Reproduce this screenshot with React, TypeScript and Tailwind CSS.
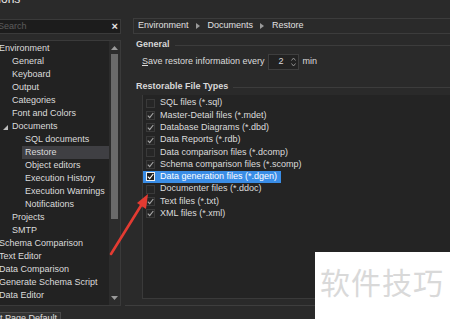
import React from "react";

type Node = { label: string; level: number; expanded?: boolean; selected?: boolean };

const tree: Node[] = [
  { label: "Environment", level: 0 },
  { label: "General", level: 1 },
  { label: "Keyboard", level: 1 },
  { label: "Output", level: 1 },
  { label: "Categories", level: 1 },
  { label: "Font and Colors", level: 1 },
  { label: "Documents", level: 1, expanded: true },
  { label: "SQL documents", level: 2 },
  { label: "Restore", level: 2, selected: true },
  { label: "Object editors", level: 2 },
  { label: "Execution History", level: 2 },
  { label: "Execution Warnings", level: 2 },
  { label: "Notifications", level: 2 },
  { label: "Projects", level: 1 },
  { label: "SMTP", level: 1 },
  { label: "Schema Comparison", level: 0 },
  { label: "Text Editor", level: 0 },
  { label: "Data Comparison", level: 0 },
  { label: "Generate Schema Script", level: 0 },
  { label: "Data Editor", level: 0 },
];

const fileTypes = [
  { label: "SQL files (*.sql)", checked: false },
  { label: "Master-Detail files (*.mdet)", checked: true },
  { label: "Database Diagrams (*.dbd)", checked: true },
  { label: "Data Reports (*.rdb)", checked: true },
  { label: "Data comparison files (*.dcomp)", checked: false },
  { label: "Schema comparison files (*.scomp)", checked: true },
  { label: "Data generation files (*.dgen)", checked: true, selected: true },
  { label: "Documenter files (*.ddoc)", checked: false },
  { label: "Text files (*.txt)", checked: true },
  { label: "XML files (*.xml)", checked: true },
];

const indent = ["pl-0", "pl-[12px]", "pl-[25px]"];

const Check = ({ checked, selected }: { checked: boolean; selected?: boolean }) => (
  <div
    className={
      "w-[9px] h-[9px] flex items-center justify-center border " +
      (selected ? "border-[#f0f0f0] bg-[#1e1e1e]" : "border-[#3a3a3a] bg-[#262626]")
    }
  >
    {checked && (
      <svg width="7" height="7" viewBox="0 0 7 7">
        <path d="M0.8 3.6 L2.7 5.6 L6.3 1" stroke={selected ? "#ffffff" : "#a8a8a8"} strokeWidth="1.1" fill="none" />
      </svg>
    )}
  </div>
);

const Sep = () => (
  <svg width="4" height="6" viewBox="0 0 4 6" className="ml-[7px] mr-[8px]">
    <path d="M0 0 L4 3 L0 6 Z" fill="#9a9a9a" />
  </svg>
);

const App = () => {
  return (
    <div className="relative w-[450px] h-[319px] overflow-hidden bg-[#2a2a2a] text-[9px] text-[#dcdcdc] font-['Liberation_Sans','Noto_Sans_CJK_SC',sans-serif]">
      <div className="h-[17px] flex">
        <div className="-mt-[7px] -ml-[21px] h-[12px] text-[12px] leading-[12px] text-[#e6e6e6]">Options</div>
      </div>

      <div className="flex">
        {/* left navigation */}
        <div className="w-[121px] flex flex-col">
          <div className="mt-[2px] h-[15px] flex items-center justify-between border border-[#3a3a3a] border-l-0 bg-[#1c1c1c]">
            <span className="-ml-[2px] text-[#5c5c5c]">Search</span>
            <span className="mr-[2px] text-[11px] font-bold text-[#e6e6e6] leading-none">×</span>
          </div>
          <div className="mt-[6px] h-[266px] flex border border-[#3a3a3a] border-l-0 bg-[#222222]">
            <div className="flex-1 pt-[1px] overflow-hidden">
              {tree.map((n) => (
                <div key={n.label} className={"h-[13px] flex items-center " + indent[n.level]}>
                  <div
                    className={
                      "relative h-[13px] flex items-center whitespace-nowrap " +
                      (n.level === 0 ? "-ml-[1px] " : "") +
                      (n.selected ? "flex-1 bg-[#3f3f43] -ml-[3px] pl-[3px]" : "")
                    }
                  >
                    {n.expanded && (
                      <svg width="5" height="5" viewBox="0 0 5 5" className="absolute -left-[9px] top-[5px]">
                        <path d="M5 0 L5 5 L0 5 Z" fill="#bdbdbd" />
                      </svg>
                    )}
                    {n.label}
                  </div>
                </div>
              ))}
            </div>
            <div className="w-[11px] flex flex-col items-center bg-[#2c2c2c]">
              <svg width="7" height="4" viewBox="0 0 7 4" className="mt-[5px]">
                <path d="M0 4 L3.5 0 L7 4 Z" fill="#9a9a9a" />
              </svg>
              <div className="mt-[4px] w-[7px] h-[165px] bg-[#6a6a6a]" />
              <div className="flex-1" />
              <svg width="7" height="4" viewBox="0 0 7 4" className="mb-[5px]">
                <path d="M0 0 L3.5 4 L7 0 Z" fill="#9a9a9a" />
              </svg>
            </div>
          </div>
          <div className="mt-[6px] -ml-[25px] w-[86px] h-[14px] flex items-center justify-center border border-[#4a4a4a] bg-[#323232] text-[#e0e0e0]">
            Reset Page Default
          </div>
        </div>

        {/* right content */}
        <div className="ml-[12px] flex-1 flex flex-col">
          <div className="mt-[1px] h-[16px] flex items-center pl-[4px] border border-r-0 border-[#3c3c3c] bg-[#2a2a2a] text-[#e0e0e0]">
            Environment
            <Sep />
            Documents
            <Sep />
            Restore
          </div>
          <div className="flex items-center mt-[5px] h-[12px]">
            <span className="pl-[3px] font-bold text-[#d8d8d8]">General</span>
            <div className="ml-[5px] flex-1 h-px bg-[#3c3c3c]" />
          </div>
          <div className="mt-[3px] flex items-center h-[16px] pl-[9px]">
            <span>
              <span className="underline">S</span>ave restore information every
            </span>
            <div className="ml-[3px] w-[31px] h-[16px] flex items-center justify-between border border-[#3e3e3e] bg-[#222222] pl-[10px] pr-[2px]">
              <span>2</span>
              <svg width="5" height="10" viewBox="0 0 5 10">
                <path d="M0.5 3.5 L2.5 1 L4.5 3.5 M0.5 6.5 L2.5 9 L4.5 6.5" stroke="#9a9a9a" strokeWidth="0.9" fill="none" />
              </svg>
            </div>
            <span className="ml-[4px]">min</span>
          </div>
          <div className="flex items-center mt-[11px] h-[12px]">
            <span className="pl-[3px] font-bold text-[#d8d8d8]">Restorable File Types</span>
            <div className="ml-[5px] flex-1 h-px bg-[#3c3c3c]" />
          </div>
          <div className="mt-[2px] ml-[9px] h-[204px] border-l border-b border-[#3a3a3a] bg-[#242424] pt-[2px]">
            {fileTypes.map((f) => (
              <div key={f.label} className="h-[12.3px] flex items-center">
                <div
                  className={
                    "h-[12.3px] flex items-center pl-[3px] pr-[4px] whitespace-nowrap " +
                    (f.selected ? "bg-[#3a8de6] text-white" : "")
                  }
                >
                  <Check checked={f.checked} selected={f.selected} />
                  <span className="ml-[5px]">{f.label}</span>
                </div>
              </div>
            ))}
          </div>
          <div className="mt-[6px] h-px bg-[#3e3e3e] -ml-[8px]" />
        </div>
      </div>

      {/* red annotation arrow */}
      <svg width="450" height="319" className="absolute left-0 top-0 pointer-events-none">
        <line x1="111" y1="254" x2="142" y2="204" stroke="#e33b32" strokeWidth="2.6" strokeLinecap="round" />
        <path d="M148 194 L137 203 L146 209 Z" fill="#e33b32" />
      </svg>

      {/* watermark */}
      <div className="absolute left-[315px] top-[252px] w-[135px] h-[67px] bg-white flex items-start pt-[14px] pl-[5px]">
        <span className="text-[30px] leading-none tracking-[1px] text-[#d9d9d9] font-['Noto_Sans_CJK_SC',sans-serif]">软件技巧</span>
      </div>
    </div>
  );
};

export default App;
